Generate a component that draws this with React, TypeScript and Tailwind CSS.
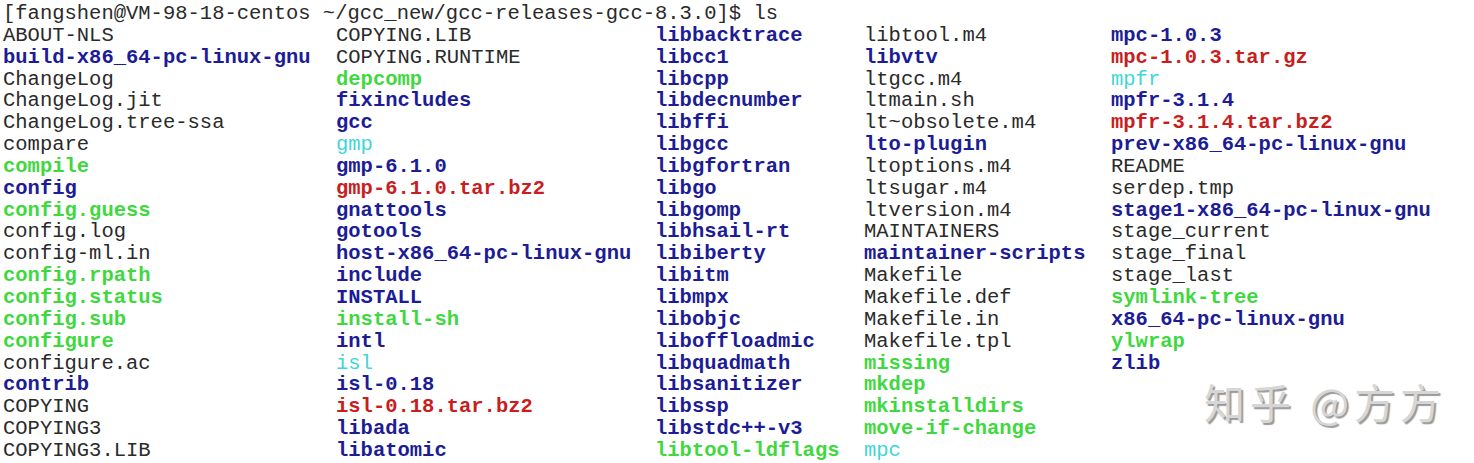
type Kind = "plain" | "dir" | "exe" | "link" | "arc";

const tone: Record<Kind, string> = {
  plain: "text-[#2a2a2a]",
  dir: "text-[#1c1c96] font-bold",
  exe: "text-[#3fd83f] font-bold",
  link: "text-[#3fd6d6]",
  arc: "text-[#c81e1e] font-bold",
};

const columns: { width: string; items: [string, Kind][] }[] = [
  {
    width: "w-[333px]",
    items: [
      ["ABOUT-NLS", "plain"],
      ["build-x86_64-pc-linux-gnu", "dir"],
      ["ChangeLog", "plain"],
      ["ChangeLog.jit", "plain"],
      ["ChangeLog.tree-ssa", "plain"],
      ["compare", "plain"],
      ["compile", "exe"],
      ["config", "dir"],
      ["config.guess", "exe"],
      ["config.log", "plain"],
      ["config-ml.in", "plain"],
      ["config.rpath", "exe"],
      ["config.status", "exe"],
      ["config.sub", "exe"],
      ["configure", "exe"],
      ["configure.ac", "plain"],
      ["contrib", "dir"],
      ["COPYING", "plain"],
      ["COPYING3", "plain"],
      ["COPYING3.LIB", "plain"],
    ],
  },
  {
    width: "w-[319px]",
    items: [
      ["COPYING.LIB", "plain"],
      ["COPYING.RUNTIME", "plain"],
      ["depcomp", "exe"],
      ["fixincludes", "dir"],
      ["gcc", "dir"],
      ["gmp", "link"],
      ["gmp-6.1.0", "dir"],
      ["gmp-6.1.0.tar.bz2", "arc"],
      ["gnattools", "dir"],
      ["gotools", "dir"],
      ["host-x86_64-pc-linux-gnu", "dir"],
      ["include", "dir"],
      ["INSTALL", "dir"],
      ["install-sh", "exe"],
      ["intl", "dir"],
      ["isl", "link"],
      ["isl-0.18", "dir"],
      ["isl-0.18.tar.bz2", "arc"],
      ["libada", "dir"],
      ["libatomic", "dir"],
    ],
  },
  {
    width: "w-[209px]",
    items: [
      ["libbacktrace", "dir"],
      ["libcc1", "dir"],
      ["libcpp", "dir"],
      ["libdecnumber", "dir"],
      ["libffi", "dir"],
      ["libgcc", "dir"],
      ["libgfortran", "dir"],
      ["libgo", "dir"],
      ["libgomp", "dir"],
      ["libhsail-rt", "dir"],
      ["libiberty", "dir"],
      ["libitm", "dir"],
      ["libmpx", "dir"],
      ["libobjc", "dir"],
      ["liboffloadmic", "dir"],
      ["libquadmath", "dir"],
      ["libsanitizer", "dir"],
      ["libssp", "dir"],
      ["libstdc++-v3", "dir"],
      ["libtool-ldflags", "exe"],
    ],
  },
  {
    width: "w-[247px]",
    items: [
      ["libtool.m4", "plain"],
      ["libvtv", "dir"],
      ["ltgcc.m4", "plain"],
      ["ltmain.sh", "plain"],
      ["lt~obsolete.m4", "plain"],
      ["lto-plugin", "dir"],
      ["ltoptions.m4", "plain"],
      ["ltsugar.m4", "plain"],
      ["ltversion.m4", "plain"],
      ["MAINTAINERS", "plain"],
      ["maintainer-scripts", "dir"],
      ["Makefile", "plain"],
      ["Makefile.def", "plain"],
      ["Makefile.in", "plain"],
      ["Makefile.tpl", "plain"],
      ["missing", "exe"],
      ["mkdep", "exe"],
      ["mkinstalldirs", "exe"],
      ["move-if-change", "exe"],
      ["mpc", "link"],
    ],
  },
  {
    width: "flex-1",
    items: [
      ["mpc-1.0.3", "dir"],
      ["mpc-1.0.3.tar.gz", "arc"],
      ["mpfr", "link"],
      ["mpfr-3.1.4", "dir"],
      ["mpfr-3.1.4.tar.bz2", "arc"],
      ["prev-x86_64-pc-linux-gnu", "dir"],
      ["README", "plain"],
      ["serdep.tmp", "plain"],
      ["stage1-x86_64-pc-linux-gnu", "dir"],
      ["stage_current", "plain"],
      ["stage_final", "plain"],
      ["stage_last", "plain"],
      ["symlink-tree", "exe"],
      ["x86_64-pc-linux-gnu", "dir"],
      ["ylwrap", "exe"],
      ["zlib", "dir"],
    ],
  },
];

export default function App() {
  return (
    <div className="relative w-[1474px] h-[463px] overflow-hidden bg-white pl-[3px] pt-[3px] font-['Liberation_Mono','Courier_New',monospace] text-[20.5px] leading-[21.85px] whitespace-pre">
      <div className="text-[#2a2a2a]">[fangshen@VM-98-18-centos ~/gcc_new/gcc-releases-gcc-8.3.0]$ ls</div>

      <div className="flex">
        {columns.map((col, i) => (
          <div key={i} className={`flex flex-col ${col.width}`}>
            {col.items.map(([name, kind]) => (
              <div key={name} className={tone[kind]}>
                {name}
              </div>
            ))}
          </div>
        ))}
      </div>

      {/* watermark */}
      <div className="absolute left-[1204px] top-[376px] text-[41px] leading-[50px] tracking-[5px] text-[#d6d6d6] font-['Noto_Sans_CJK_SC',sans-serif] [text-shadow:2px_2px_1px_#9a9a9a] whitespace-pre">
        知乎 @方方
      </div>
    </div>
  );
}
